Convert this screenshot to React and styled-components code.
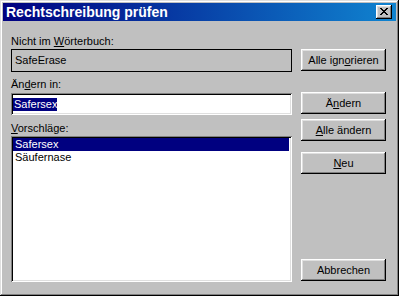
import React from 'react';
import styled, { createGlobalStyle } from 'styled-components';

const Global = createGlobalStyle`
  html, body { margin: 0; padding: 0; background: #c0c0c0; }
  body {
    width: 399px; height: 296px; overflow: hidden;
    font-family: "Liberation Sans", Arial, sans-serif;
    font-size: 11px; color: #000;
  }
`;

const Window = styled.div`
  box-sizing: border-box;
  width: 399px;
  height: 296px;
  padding: 3px;
  background: #c0c0c0;
  display: flex;
  flex-direction: column;
  box-shadow: inset -1px -1px #000, inset 1px 1px #dfdfdf,
    inset -2px -2px #808080, inset 2px 2px #fff;
`;

const TitleBar = styled.div`
  height: 18px;
  flex: none;
  display: flex;
  align-items: center;
  justify-content: space-between;
  padding: 0 4px 0 3px;
  background: linear-gradient(to right, #000080, #1084d0);
  color: #fff;
  font-weight: bold;
  font-size: 14px;
  line-height: 18px;
`;

const CloseButton = styled.div`
  box-sizing: border-box;
  width: 16px;
  height: 14px;
  background: #c0c0c0;
  display: flex;
  align-items: center;
  justify-content: center;
  padding: 0 1px 1px 0;
  box-shadow: inset -1px -1px #000, inset 1px 1px #fff,
    inset -2px -2px #808080, inset 2px 2px #dfdfdf;
`;

const Body = styled.div`
  flex: 1;
  display: flex;
  gap: 9px;
  padding: 14px 10px 11px 8px;
`;

const LeftColumn = styled.div`
  width: 281px;
  display: flex;
  flex-direction: column;
`;

const RightColumn = styled.div`
  width: 85px;
  display: flex;
  flex-direction: column;
  padding-top: 14px;
  padding-bottom: 1px;
`;

const Label = styled.div`
  height: 13px;
  line-height: 13px;
  margin-top: ${p => p.$mt || 0}px;
  margin-bottom: ${p => p.$mb || 1}px;
  white-space: nowrap;
`;

const Key = styled.span`
  text-decoration: underline;
  text-underline-offset: 1px;
`;

const ReadOnlyField = styled.div`
  box-sizing: border-box;
  height: 23px;
  border: 1px solid #000;
  padding: 0 3px;
  display: flex;
  align-items: center;
  line-height: 13px;
`;

const EditField = styled.div`
  box-sizing: border-box;
  height: 22px;
  background: #fff;
  padding: 2px 2px;
  display: flex;
  align-items: center;
  box-shadow: inset 1px 1px #808080, inset -1px -1px #fff,
    inset 2px 2px #000, inset -2px -2px #dfdfdf;
`;

const Selected = styled.span`
  background: #000080;
  color: #fff;
  line-height: 13px;
  padding-left: 1px;
`;

const ListBox = styled.div`
  box-sizing: border-box;
  flex: 1;
  background: #fff;
  padding: 2px 3px 2px 2px;
  box-shadow: inset 1px 1px #808080, inset -1px -1px #fff,
    inset 2px 2px #000, inset -2px -2px #dfdfdf;
`;

const ListItem = styled.div`
  height: 13px;
  line-height: 13px;
  padding-left: 2px;
  background: ${p => (p.$selected ? '#000080' : 'transparent')};
  color: ${p => (p.$selected ? '#fff' : '#000')};
`;

const Button = styled.div`
  box-sizing: border-box;
  height: 22px;
  margin-top: ${p => (p.$auto ? 'auto' : `${p.$mt || 0}px`)};
  display: flex;
  align-items: center;
  justify-content: center;
  background: #c0c0c0;
  white-space: nowrap;
  padding-bottom: 1px;
  box-shadow: inset -1px -1px #000, inset 1px 1px #fff,
    inset -2px -2px #808080, inset 2px 2px #dfdfdf;
`;

const xPattern = [
  'XX....XX',
  '.XX..XX.',
  '..XXXX..',
  '...XX...',
  '..XXXX..',
  '.XX..XX.',
  'XX....XX',
];

function CloseGlyph() {
  const rects = [];
  xPattern.forEach((row, y) =>
    row.split('').forEach((c, x) => {
      if (c === 'X') rects.push(<rect key={`${x}-${y}`} x={x} y={y} width="1" height="1" />);
    })
  );
  return (
    <svg width="8" height="7" viewBox="0 0 8 7" shapeRendering="crispEdges" fill="#000">
      {rects}
    </svg>
  );
}

export default function App() {
  return (
    <>
      <Global />
      <Window>
        <TitleBar>
          <span>Rechtschreibung prüfen</span>
          <CloseButton>
            <CloseGlyph />
          </CloseButton>
        </TitleBar>
        <Body>
          <LeftColumn>
            <Label>
              Nicht im <Key>W</Key>örterbuch:
            </Label>
            <ReadOnlyField>SafeErase</ReadOnlyField>
            <Label $mt={6} $mb={2}>
              Än<Key>d</Key>ern in:
            </Label>
            <EditField>
              <Selected>Safersex</Selected>
            </EditField>
            <Label $mt={7}>
              <Key>V</Key>orschläge:
            </Label>
            <ListBox>
              <ListItem $selected>Safersex</ListItem>
              <ListItem>Säufernase</ListItem>
            </ListBox>
          </LeftColumn>
          <RightColumn>
            <Button>
              Alle ign<Key>o</Key>rieren
            </Button>
            <Button $mt={21}>
              Ä<Key>n</Key>dern
            </Button>
            <Button $mt={5}>
              <Key>A</Key>lle ändern
            </Button>
            <Button $mt={11}>
              <Key>N</Key>eu
            </Button>
            <Button $auto>Abbrechen</Button>
          </RightColumn>
        </Body>
      </Window>
    </>
  );
}
